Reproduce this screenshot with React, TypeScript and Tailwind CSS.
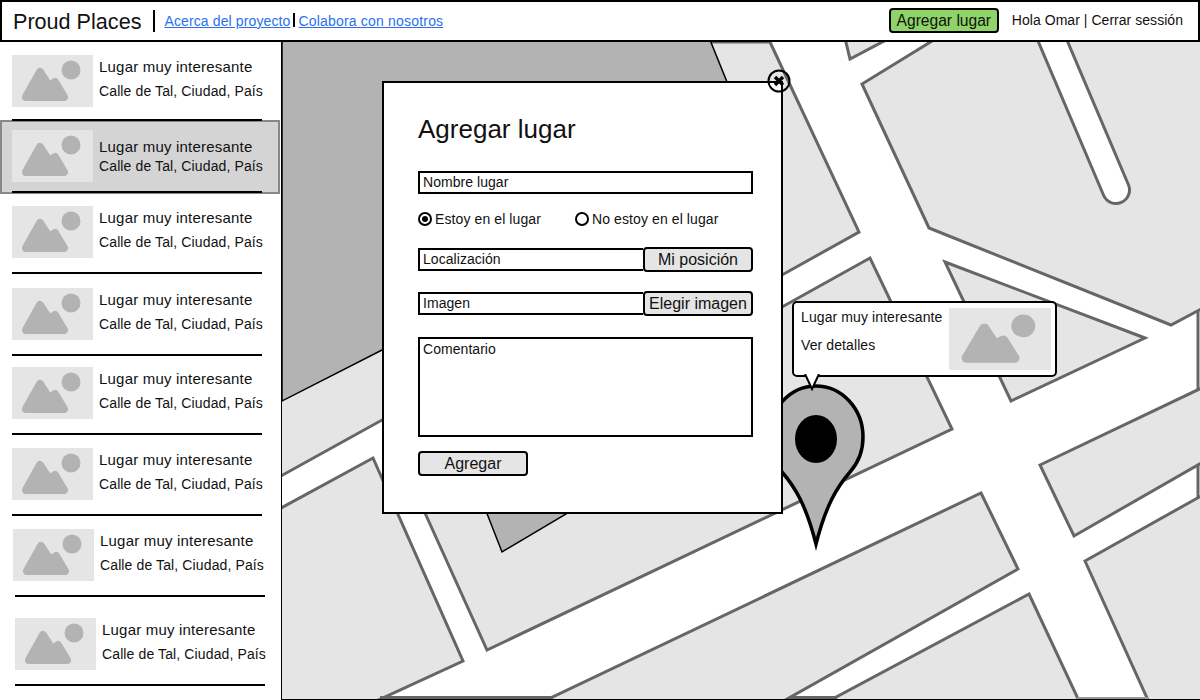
const font = "font-['Liberation_Sans',Arial,sans-serif]";

const MOUNTAIN = "M14 42 L28 17 L37 31 L43 27 L52 42 Z";

function Thumb() {
  return (
    <svg width="81" height="52" viewBox="0 0 81 52" className="shrink-0 block">
      <rect width="81" height="52" fill="#e5e5e5" />
      <circle cx="59" cy="15" r="9.5" fill="#b3b3b3" />
      <path d={MOUNTAIN} fill="#b3b3b3" stroke="#b3b3b3" strokeWidth="8" strokeLinejoin="round" />
    </svg>
  );
}

function Place({ className, titleClass, subClass }: { className: string; titleClass: string; subClass: string }) {
  return (
    <div className={`flex gap-[6px] h-[52px] shrink-0 ${className}`}>
      <Thumb />
      <div className={`flex flex-col whitespace-nowrap ${titleClass}`}>
        <div className="text-[15px] leading-[20px] tracking-[0.2px] text-[#111111]">Lugar muy interesante</div>
        <div className={`text-[14px] leading-[20px] tracking-[0.12px] text-[#111111] ${subClass}`}>Calle de Tal, Ciudad, País</div>
      </div>
    </div>
  );
}

function Rule({ className }: { className: string }) {
  return <div className={`w-[250px] h-[2px] bg-black shrink-0 ${className}`} />;
}

function Sidebar() {
  const spaced = "pt-[2px]";
  const sub = "mt-[4px]";
  return (
    <aside className="w-[281px] shrink-0 flex flex-col bg-white overflow-hidden">
      <Place className="ml-[12px] mt-[13px]" titleClass={spaced} subClass={sub} />
      <Rule className="ml-[12px] mt-[12px] relative z-10" />
      <div className="-mt-px h-[74px] w-[280px] shrink-0 flex flex-col bg-[#d4d4d4] border-2 border-[#888888]">
        <Place className="ml-[10px] mt-[8px]" titleClass="pt-[7px]" subClass="-mt-px" />
        <Rule className="ml-[10px] mt-[9px]" />
      </div>
      <Place className="ml-[12px] mt-[12px]" titleClass={spaced} subClass={sub} />
      <Rule className="ml-[12px] mt-[14px]" />
      <Place className="ml-[12px] mt-[14px]" titleClass={spaced} subClass={sub} />
      <Rule className="ml-[12px] mt-[14px]" />
      <Place className="ml-[12px] mt-[11px]" titleClass={spaced} subClass={sub} />
      <Rule className="ml-[12px] mt-[14px]" />
      <Place className="ml-[12px] mt-[13px]" titleClass={spaced} subClass={sub} />
      <Rule className="ml-[12px] mt-[14px]" />
      <Place className="ml-[13px] mt-[13px]" titleClass={spaced} subClass={sub} />
      <Rule className="ml-[15px] mt-[14px]" />
      <Place className="ml-[15px] mt-[21px]" titleClass={spaced} subClass={sub} />
      <Rule className="ml-[15px] mt-[14px]" />
    </aside>
  );
}

function MapArt() {
  const block = { fill: "#e5e5e5", stroke: "#666666", strokeWidth: 3, strokeLinejoin: "miter" as const };
  const dark = { fill: "#b3b3b3", stroke: "#000000", strokeWidth: 1.5 };
  return (
    <svg className="absolute inset-0 block" width="918" height="657" viewBox="282 42 918 657">
      <rect x="282" y="42" width="918" height="657" fill="#ffffff" />
      <polygon {...block} points="270,42 770,42 859,232 782,275 382,420 270,482" />
      <polygon {...dark} points="270,30 706,30 727,82 727,250 382,350 282,401 282,30" />
      <polygon {...block} points="843,30 850,59 905,30" />
      <polygon {...block} points="950,30 862,84 929,228 1171,325 1205,307 1205,30" />
      <line x1="1048" y1="30" x2="1116" y2="190" stroke="#666666" strokeWidth="30" strokeLinecap="round" />
      <line x1="1048" y1="30" x2="1116" y2="190" stroke="#ffffff" strokeWidth="24" strokeLinecap="round" />
      <polygon {...block} points="270,514 373,458 463,661 270,750" />
      <polygon {...block} points="410,480 782,307 870,258 952,429 487,650 425,513" />
      <polygon {...dark} points="470,470 640,470 502,552" />
      <polygon {...block} points="945,262 1145,338 1011,401" />
      <polygon {...block} points="1040,465 1210,384 1210,458 1074,536" />
      <polygon {...block} points="1085,561 1210,491 1210,720 1157,720" />
      <polygon {...block} points="981,493 1018,569 780,703 540,703" />
      <polygon {...block} points="1029,594 1080,703 825,703" />
      <line x1="380" y1="698" x2="553" y2="698" stroke="#666666" strokeWidth="4" />
      <line x1="790" y1="698" x2="837" y2="698" stroke="#666666" strokeWidth="4" />
      <line x1="1077" y1="698" x2="1148" y2="698" stroke="#999999" strokeWidth="2" />
      <line x1="1198" y1="310" x2="1198" y2="390" stroke="#666666" strokeWidth="3" />
      <line x1="1198" y1="465" x2="1198" y2="498" stroke="#666666" strokeWidth="3" />
      <path
        d="M816 544 C806 505 795 487 782 472 C773 462 769 450 769 437 C769 409 790 386 816 386 C842 386 863 409 863 437 C863 450 859 462 850 472 C837 487 826 505 816 544 Z"
        fill="#b3b3b3"
        stroke="#000000"
        strokeWidth="3.5"
        strokeMiterlimit="10"
      />
      <ellipse cx="816" cy="439" rx="21" ry="24" fill="#000000" />
    </svg>
  );
}

function Field({ className, children }: { className: string; children: string }) {
  return (
    <div className={`border-2 border-black bg-white pl-[3px] text-[14px] leading-[18px] tracking-[0.05px] text-[#111111] ${className}`}>{children}</div>
  );
}

function Radio({ on, label, className }: { on: boolean; label: string; className?: string }) {
  return (
    <div className={`flex items-center gap-[3px] text-[14px] leading-[18px] tracking-[0.1px] text-[#111111] ${className ?? ""}`}>
      <span className="w-[14px] h-[14px] rounded-full border-2 border-black flex items-center justify-center">
        {on && <span className="w-[6px] h-[6px] rounded-full bg-black" />}
      </span>
      {label}
    </div>
  );
}

function Modal() {
  const btn = "h-[25px] w-[110px] shrink-0 -my-px rounded-[4px] border-2 border-black bg-[#e5e5e5] text-[16px] leading-[20px] text-[#111111] text-center";
  return (
    <div className="absolute left-[100px] top-[39px] w-[401px] h-[433px] border-2 border-black bg-white pl-[34px] pr-[28px] flex flex-col">
      <h1 className="mt-[28px] text-[26px] leading-[36px] font-normal text-[#111111]">Agregar lugar</h1>
      <Field className="mt-[24px] h-[23px]">Nombre lugar</Field>
      <div className="mt-[16px] h-[18px] flex">
        <Radio on label="Estoy en el lugar" />
        <Radio on={false} label="No estoy en el lugar" className="ml-[34px]" />
      </div>
      <div className="mt-[20px] h-[23px] flex">
        <Field className="flex-1 h-[23px] border-r-0">Localización</Field>
        <button className={btn}>Mi posición</button>
      </div>
      <div className="mt-[21px] h-[23px] flex">
        <Field className="flex-1 h-[23px] border-r-0">Imagen</Field>
        <button className={btn}>Elegir imagen</button>
      </div>
      <Field className="mt-[22px] h-[100px] pt-px">Comentario</Field>
      <button className="mt-[14px] w-[110px] h-[25px] rounded-[4px] border-2 border-black bg-[#e5e5e5] text-[16px] leading-[20px] text-[#111111] text-center">
        Agregar
      </button>
    </div>
  );
}

function CloseIcon() {
  return (
    <svg className="absolute left-[485px] top-[27px] block" width="24" height="24" viewBox="0 0 24 24">
      <circle cx="12" cy="12" r="10.5" fill="none" stroke="#000000" strokeWidth="2" />
      <path d="M8 8 L16 16 M16 8 L8 16" stroke="#000000" strokeWidth="3.4" />
    </svg>
  );
}

function Callout() {
  return (
    <div className="absolute left-[510px] top-[259px] w-[265px] h-[76px] rounded-[5px] border-2 border-black bg-white flex justify-between pl-[7px] pr-[4px] pt-[4px]">
      <div className="flex flex-col gap-[8px] text-[14px] leading-[20px] tracking-[0.1px] text-[#111111] whitespace-nowrap">
        <div>Lugar muy interesante</div>
        <div>Ver detalles</div>
      </div>
      <svg width="102" height="62" viewBox="0 0 81 52" preserveAspectRatio="none" className="shrink-0 block mt-px">
        <rect width="81" height="52" fill="#e5e5e5" />
        <circle cx="59" cy="15" r="9.5" fill="#b3b3b3" />
        <path d={MOUNTAIN} fill="#b3b3b3" stroke="#b3b3b3" strokeWidth="8" strokeLinejoin="round" />
      </svg>
      <svg className="absolute left-[10px] top-[71px] block" width="18" height="17" viewBox="0 0 18 17">
        <path d="M1 0 L8 15 L15 0" fill="#ffffff" stroke="#000000" strokeWidth="2" />
      </svg>
    </div>
  );
}

export default function App() {
  return (
    <div className={`w-[1200px] h-[700px] flex flex-col bg-white overflow-hidden ${font}`}>
      <header className="h-[42px] shrink-0 border-2 border-black flex items-center bg-white pl-[11px] pr-[15px]">
        <div className="mt-[2px] text-[21.6px] leading-[28px] text-[#111111]">Proud Places</div>
        <div className="ml-[12px] w-[2px] h-[22px] bg-black" />
        <a href="#" className="ml-[9px] -mt-px text-[14px] leading-[18px] tracking-[0.12px] text-[#2a70ee] underline">Acerca del proyecto</a>
        <div className="mx-[3px] -mt-[2px] w-[2px] h-[14px] bg-black" />
        <a href="#" className="-mt-px text-[14px] leading-[18px] tracking-[0.19px] text-[#2a70ee] underline">Colabora con nosotros</a>
        <button className="ml-auto -mt-[2px] w-[110px] h-[25px] pt-px rounded-[4px] border-2 border-black bg-[#8fd468] text-[15.6px] leading-[20px] text-[#111111] text-center">
          Agregar lugar
        </button>
        <div className="ml-[13px] -mt-[2px] text-[14px] leading-[18px] tracking-[0.04px] text-[#111111] whitespace-nowrap">Hola Omar | Cerrar sessión</div>
      </header>
      <div className="flex-1 flex min-h-0">
        <Sidebar />
        <main className="relative flex-1 min-w-0 border-l border-b border-r border-black">
          <MapArt />
          <Modal />
          <CloseIcon />
          <Callout />
        </main>
      </div>
    </div>
  );
}
